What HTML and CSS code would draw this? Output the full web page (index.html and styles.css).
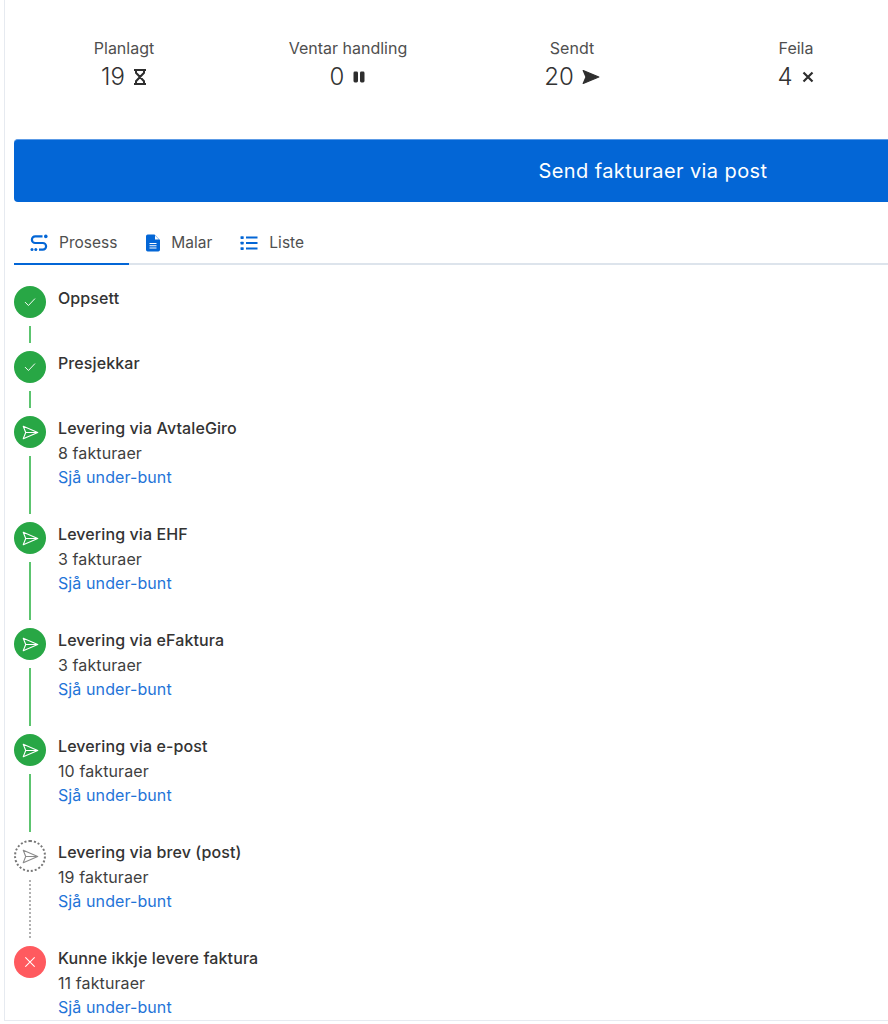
FILE: index.html
```html
<!DOCTYPE html>
<html lang="nn">
<head>
<meta charset="utf-8">
<title>Fakturabunt</title>
<link rel="stylesheet" href="styles.css">
</head>
<body>
<svg class="defs" width="0" height="0" aria-hidden="true">
  <symbol id="i-send" viewBox="0 0 16 16"><path d="M1.200 2.200 14.800 8 1.200 13.800 3.500 8ZM3.500 8h11.300" fill="none" stroke="currentColor" stroke-width="1.050" stroke-linejoin="round"/></symbol>
  <symbol id="i-check" viewBox="0 0 16 16"><path d="M2.600 8.400 6.200 12l7.200-7.600" fill="none" stroke="currentColor" stroke-width="1.100" stroke-linecap="round" stroke-linejoin="round"/></symbol>
</svg>
<main class="page">
  <section class="stats">
    <div class="stat">
      <div class="stat-label">Planlagt</div>
      <div class="stat-value">19 <svg class="stat-icon" viewBox="0 0 14 16"><path d="M1 1.100h12M1 14.900h12M3 1.100v2.700L11 12.200v2.700M11 1.100v2.700L3 12.200v2.700" fill="none" stroke="currentColor" stroke-width="2"/></svg></div>
    </div>
    <div class="stat">
      <div class="stat-label">Ventar handling</div>
      <div class="stat-value">0 <svg class="stat-icon" viewBox="0 0 14 16"><rect x="1.500" y="2.500" width="4.500" height="11" rx="1.400" fill="currentColor"/><rect x="8" y="2.500" width="4.500" height="11" rx="1.400" fill="currentColor"/></svg></div>
    </div>
    <div class="stat">
      <div class="stat-label">Sendt</div>
      <div class="stat-value">20 <svg class="stat-icon wide" viewBox="0 0 18 16"><path d="M1.200 1.500 16.800 8 1.200 14.500 4 8Z" fill="currentColor" stroke="currentColor" stroke-width="1.200" stroke-linejoin="round"/></svg></div>
    </div>
    <div class="stat">
      <div class="stat-label">Feila</div>
      <div class="stat-value">4 <svg class="stat-icon" viewBox="0 0 14 16"><path d="M2.500 3.500l9 9M11.500 3.500l-9 9" fill="none" stroke="currentColor" stroke-width="2.200"/></svg></div>
    </div>
  </section>

  <button class="primary" type="button">Send fakturaer via post</button>

  <nav class="tabs">
    <a class="tab active">
      <svg class="tab-icon" viewBox="0 0 18 18"><path d="M12.500 2.400H5.200a3.300 3.300 0 0 0 0 6.600h7.600a3.300 3.300 0 0 1 0 6.600H9" fill="none" stroke="currentColor" stroke-width="2.200"/><circle cx="15.800" cy="2.400" r="1.800" fill="currentColor"/><circle cx="2" cy="15.600" r="1.500" fill="currentColor"/><circle cx="5.800" cy="15.600" r="1.500" fill="currentColor"/></svg>
      Prosess
    </a>
    <a class="tab doc">
      <svg class="tab-icon" viewBox="0 0 16 18"><path fill-rule="evenodd" d="M2.700 .5H9.500L15 6v9.800a1.700 1.700 0 0 1-1.700 1.700H2.700A1.700 1.700 0 0 1 1 15.800V2.200A1.700 1.700 0 0 1 2.700 .5ZM10 1.500V5.500h4ZM4.500 9v1h7V9Zm0 2.300v1h7v-1Zm0 2.300v1h7v-1Z" fill="currentColor"/></svg>
      Malar
    </a>
    <a class="tab">
      <svg class="tab-icon" viewBox="0 0 18 18"><path d="M6 3.500h11.500M6 9h11.500M6 14.500h11.500" stroke="currentColor" stroke-width="2" fill="none"/><rect x=".5" y="2.200" width="3.200" height="2.700" rx=".6" fill="currentColor"/><rect x=".5" y="7.700" width="3.200" height="2.700" rx=".6" fill="currentColor"/><rect x=".5" y="13.200" width="3.200" height="2.700" rx=".6" fill="currentColor"/></svg>
      Liste
    </a>
  </nav>

  <ol class="steps">
    <li class="step short">
      <div class="rail"><span class="dot done"><svg class="dot-icon"><use href="#i-check"/></svg></span><span class="line"></span></div>
      <div class="body"><div class="title">Oppsett</div></div>
    </li>
    <li class="step short">
      <div class="rail"><span class="dot done"><svg class="dot-icon"><use href="#i-check"/></svg></span><span class="line"></span></div>
      <div class="body"><div class="title">Presjekkar</div></div>
    </li>
    <li class="step">
      <div class="rail"><span class="dot done"><svg class="dot-icon send"><use href="#i-send"/></svg></span><span class="line"></span></div>
      <div class="body"><div class="title">Levering via AvtaleGiro</div><div class="count">8 fakturaer</div><a class="link">Sjå under-bunt</a></div>
    </li>
    <li class="step">
      <div class="rail"><span class="dot done"><svg class="dot-icon send"><use href="#i-send"/></svg></span><span class="line"></span></div>
      <div class="body"><div class="title">Levering via EHF</div><div class="count">3 fakturaer</div><a class="link">Sjå under-bunt</a></div>
    </li>
    <li class="step">
      <div class="rail"><span class="dot done"><svg class="dot-icon send"><use href="#i-send"/></svg></span><span class="line"></span></div>
      <div class="body"><div class="title">Levering via eFaktura</div><div class="count">3 fakturaer</div><a class="link">Sjå under-bunt</a></div>
    </li>
    <li class="step">
      <div class="rail"><span class="dot done"><svg class="dot-icon send"><use href="#i-send"/></svg></span><span class="line"></span></div>
      <div class="body"><div class="title">Levering via e-post</div><div class="count">10 fakturaer</div><a class="link">Sjå under-bunt</a></div>
    </li>
    <li class="step">
      <div class="rail"><span class="dot pending"><svg class="dot-icon send"><use href="#i-send"/></svg></span><span class="line dotted"></span></div>
      <div class="body"><div class="title">Levering via brev (post)</div><div class="count">19 fakturaer</div><a class="link">Sjå under-bunt</a></div>
    </li>
    <li class="step">
      <div class="rail"><span class="dot failed"><svg class="dot-icon cross" viewBox="0 0 16 16"><path d="M3 3l10 10M13 3 3 13" fill="none" stroke="currentColor" stroke-width="1.200" stroke-linecap="round"/></svg></span></div>
      <div class="body"><div class="title">Kunne ikkje levere faktura</div><div class="count">11 fakturaer</div><a class="link">Sjå under-bunt</a></div>
    </li>
  </ol>
</main>
</body>
</html>
```
FILE: styles.css
```css
* { box-sizing: border-box; }
html, body { margin: 0; height: 100%; overflow: hidden; background: #fff; }
body {
  font-family: Inter, "Noto Sans", sans-serif;
  color: #2e2e2e;
  height: 1024px;
}
.defs { position: absolute; }
.page {
  width: 1400px;
  height: 1021px;
  margin-left: 4px;
  border-left: 1px solid #e6eaf0;
  border-bottom: 1px solid #e6eaf0;
  padding: 39px 0 0 9px;
}
.stats { display: grid; grid-template-columns: repeat(4, 224px); margin-left: -2px; height: 100px; }
.stat { text-align: center; }
.stat-label { font-size: 16px; line-height: 18px; color: #4f4f4f; }
.stat-value { margin-top: 5px; font-size: 24px; line-height: 30px; color: #333; font-weight: 300; display: flex; justify-content: center; align-items: center; gap: 8px; }
.stat-icon { width: 14px; height: 16px; color: #2e2e2e; }
.stat-icon.wide { width: 18px; }
.primary {
  display: block;
  width: 1278px;
  height: 63px;
  border: 0;
  border-top: 1px solid #5c9be6;
  border-radius: 4px;
  background: #0366d6;
  color: #fff;
  font: 400 20px/60px Inter, "Noto Sans", sans-serif;
  letter-spacing: .4px;
  text-align: center;
}
.tabs { display: flex; margin-top: 20px; height: 43px; border-bottom: 2px solid #dde4ec; }
.tab { display: flex; align-items: center; gap: 11px; padding: 0 12px 0 16px; height: 43px; font-size: 15.5px; color: #4f4f4f; border-bottom: 2px solid transparent; }
.tab.active { border-bottom-color: #0366d6; }
.tab.doc { gap: 10px; }
.tab.doc .tab-icon { width: 16px; }
.tab-icon { width: 18px; height: 18px; color: #0366d6; }
.steps { list-style: none; margin: 21px 0 0; padding: 0; }
.step { display: flex; gap: 12px; height: 106px; }
.step.short { height: 65px; }
.rail { width: 32px; display: flex; flex-direction: column; align-items: center; }
.dot { width: 32px; height: 32px; border-radius: 50%; display: flex; align-items: center; justify-content: center; color: #fff; flex: none; }
.dot.done { background: #28a745; }
.dot.failed { background: #ff5a5f; }
.dot.pending { border: 2px dotted #777; color: #8a8a8a; }
.dot-icon { width: 14px; height: 14px; }
.dot-icon.send { width: 17px; height: 17px; }
.dot-icon.cross { width: 14px; height: 14px; }
.line { width: 2px; flex: 1; margin: 8px 0; background: #5cc46f; }
.line.dotted { width: 2px; background: none; border-left: 2px dotted #b0b0b0; }
.body { padding-top: 2px; font-size: 16px; line-height: 24px; letter-spacing: .1px; }
.title { font-weight: 500; color: #333; line-height: 20px; margin-bottom: 3px; }
.count { color: #3f3f3f; line-height: 24px; }
.link { color: #1f74d8; display: block; line-height: 24px; }
```
